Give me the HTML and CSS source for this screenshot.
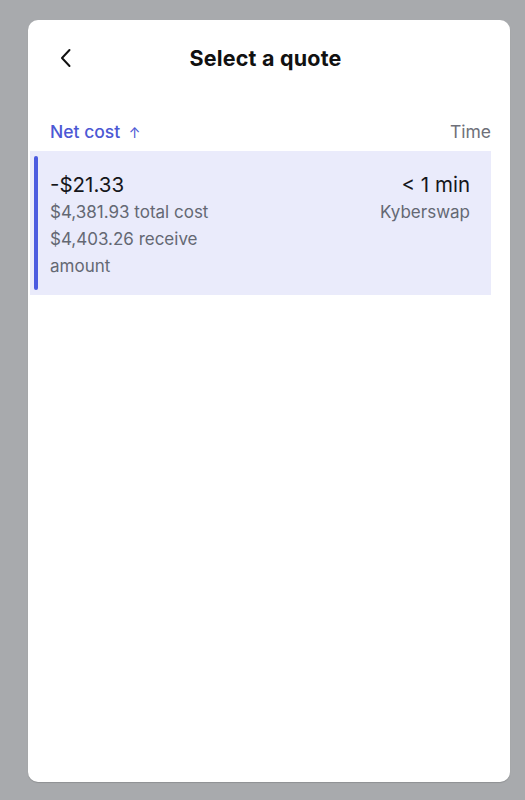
FILE: index.html
```html
<!DOCTYPE html>
<html>
<head>
<meta charset="utf-8">
<link rel="stylesheet" href="styles.css">
</head>
<body>
<div class="backdrop">
  <div class="sheet">
    <header class="header">
      <button class="back" aria-label="Back">
        <svg width="12" height="20" viewBox="0 0 12 20"><path d="M9.5 2 L2 10 L9.5 18" fill="none" stroke="#111" stroke-width="2" stroke-linecap="round" stroke-linejoin="round"/></svg>
      </button>
      <h1 class="title">Select a quote</h1>
      <span class="spacer"></span>
    </header>
    <div class="sortbar">
      <span class="sort active">Net cost <span class="arrow">↑</span></span>
      <span class="sort">Time</span>
    </div>
    <div class="quote">
      <div class="quote-left">
        <div class="net">-$21.33</div>
        <div class="sub">$4,381.93 total cost</div>
        <div class="sub">$4,403.26 receive amount</div>
      </div>
      <div class="quote-right">
        <div class="time">&lt; 1 min</div>
        <div class="sub">Kyberswap</div>
      </div>
    </div>
  </div>
</div>
</body>
</html>
```
FILE: styles.css
```css
html, body {
  margin: 0;
  padding: 0;
  height: 100%;
}
body {
  background: #a8aaad;
  font-family: Inter, "Noto Sans", sans-serif;
}
.backdrop {
  padding: 20px 15px 18px 28px;
  height: 100%;
  box-sizing: border-box;
}
.sheet {
  background: #fff;
  border-radius: 10px;
  height: 100%;
  box-sizing: border-box;
  padding: 0 19px 0 2px;
  box-shadow: 0 1px 1px rgba(0,0,0,0.15);
}
.header {
  display: flex;
  align-items: center;
  height: 76px;
  padding: 0 20px 0 30px;
}
.back {
  border: 0;
  background: none;
  padding: 0;
  width: 40px;
  display: flex;
  align-items: center;
}
.title {
  flex: 1;
  margin: 0;
  text-align: center;
  font-size: 21.5px;
  font-weight: 700;
  color: #111;
  letter-spacing: 0.2px;
}
.spacer {
  width: 40px;
}
.sortbar {
  display: flex;
  justify-content: space-between;
  align-items: center;
  padding: 25px 0 9px 20px;
  font-size: 17.5px;
}
.sort {
  color: #6e7079;
}
.sort.active {
  color: #4c58d4;
  font-weight: 500;
}
.arrow {
  font-size: 14px;
  margin-left: 4px;
  font-weight: 400;
}
.quote {
  position: relative;
  background: #eaebfb;
  display: flex;
  justify-content: space-between;
  padding: 19px 21px 15px 20px;
}
.quote::before {
  content: "";
  position: absolute;
  left: 4px;
  top: 5px;
  bottom: 5px;
  width: 4px;
  border-radius: 2px;
  background: #4b5be0;
}
.quote-left {
  width: 200px;
}
.net, .time {
  font-size: 20.5px;
  color: #15161a;
  line-height: 29px;
}
.sub {
  font-size: 17px;
  color: #646873;
  line-height: 27px;
}
.quote-right {
  text-align: right;
}
```
